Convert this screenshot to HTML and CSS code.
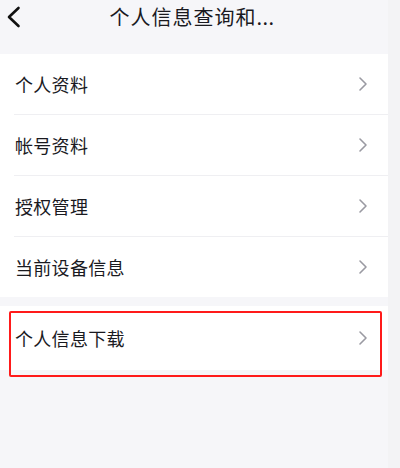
FILE: index.html
```html
<!DOCTYPE html>
<html lang="zh">
<head>
<meta charset="utf-8">
<link rel="stylesheet" href="styles.css">
</head>
<body>
<div class="page">
  <div class="main">
    <header class="nav">
      <svg class="back" width="16" height="24" viewBox="0 0 16 24"><path d="M12.5 3 L3 12 L12.5 21" fill="none" stroke="#111" stroke-width="2.6" stroke-linecap="round" stroke-linejoin="round"/></svg>
      <div class="title">个人信息查询和<span class="dots">...</span></div>
    </header>
    <section class="card">
      <div class="row"><span class="label">个人资料</span><svg class="chev" width="10" height="16" viewBox="0 0 10 16"><path d="M2 2 L8 8 L2 14" fill="none" stroke="#9a9aa2" stroke-width="1.6" stroke-linecap="round" stroke-linejoin="round"/></svg></div>
      <div class="row"><span class="label">帐号资料</span><svg class="chev" width="10" height="16" viewBox="0 0 10 16"><path d="M2 2 L8 8 L2 14" fill="none" stroke="#9a9aa2" stroke-width="1.6" stroke-linecap="round" stroke-linejoin="round"/></svg></div>
      <div class="row"><span class="label">授权管理</span><svg class="chev" width="10" height="16" viewBox="0 0 10 16"><path d="M2 2 L8 8 L2 14" fill="none" stroke="#9a9aa2" stroke-width="1.6" stroke-linecap="round" stroke-linejoin="round"/></svg></div>
      <div class="row"><span class="label">当前设备信息</span><svg class="chev" width="10" height="16" viewBox="0 0 10 16"><path d="M2 2 L8 8 L2 14" fill="none" stroke="#9a9aa2" stroke-width="1.6" stroke-linecap="round" stroke-linejoin="round"/></svg></div>
    </section>
    <section class="card card2">
      <div class="row tall"><span class="label">个人信息下载</span><svg class="chev" width="10" height="16" viewBox="0 0 10 16"><path d="M2 2 L8 8 L2 14" fill="none" stroke="#9a9aa2" stroke-width="1.6" stroke-linecap="round" stroke-linejoin="round"/></svg></div>
    </section>
  </div>
  <div class="strip"></div>
  <div class="highlight"></div>
</div>
</body>
</html>
```
FILE: styles.css
```css
html, body {
  margin: 0;
  padding: 0;
}
body {
  width: 400px;
  height: 468px;
  overflow: hidden;
  background: #f6f6f9;
  font-family: "Noto Sans CJK SC", "Noto Sans", sans-serif;
  color: #1a1a1f;
}
.page {
  position: relative;
  display: flex;
  width: 400px;
  height: 468px;
}
.main {
  width: 388px;
  background: #f6f6f9;
}
.strip {
  width: 12px;
  background: #f3f3f5;
}
.nav {
  position: relative;
  height: 36px;
  margin-bottom: 18px;
  display: flex;
  align-items: center;
  justify-content: center;
}
.back {
  position: absolute;
  left: 6px;
  top: 5px;
}
.title {
  font-size: 20px;
  letter-spacing: 1px;
  line-height: 1;
  margin-top: -2px;
  margin-left: -4px;
  color: #1a1a1f;
}
.dots {
  letter-spacing: 0.5px;
}
.card {
  background: #fff;
}
.card2 {
  margin-top: 9px;
}
.row {
  height: 60px;
  display: flex;
  align-items: center;
  justify-content: space-between;
  margin-left: 14px;
  padding: 0 20px 0 1px;
  border-bottom: 1px solid #efeff2;
}
.row:last-child {
  border-bottom: none;
}
.tall {
  height: 64px;
}
.label {
  font-size: 18px;
  line-height: 1;
  letter-spacing: 0.3px;
}
.chev {
  display: block;
}
.highlight {
  position: absolute;
  left: 9px;
  top: 311px;
  width: 369px;
  height: 62px;
  border: 2.5px solid #ff1a1a;
  border-radius: 2px;
}
```
